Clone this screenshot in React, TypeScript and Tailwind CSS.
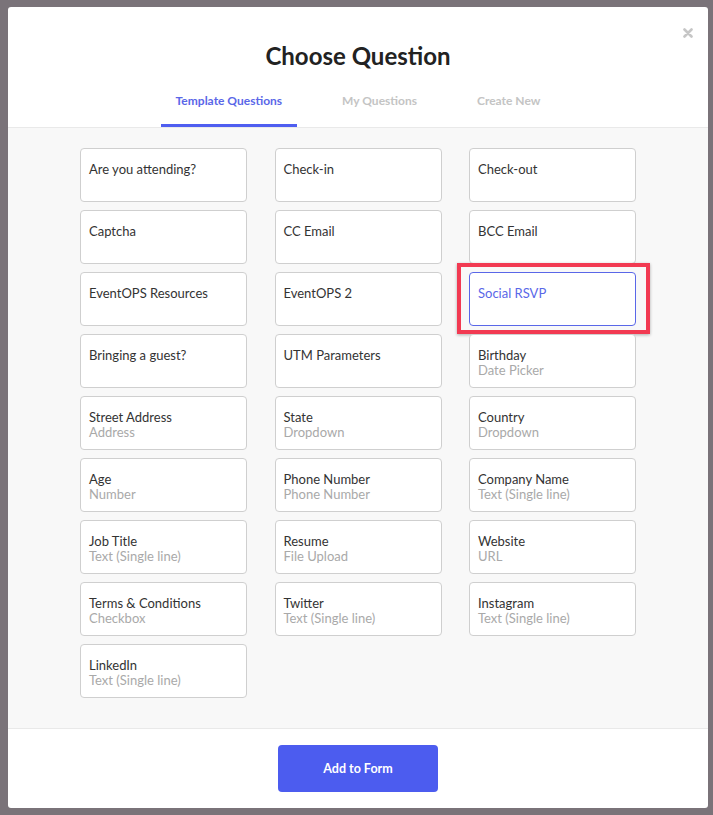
import { useState } from 'react'

interface Question {
    title: string
    type?: string
}

const questions: Question[] = [
    { title: 'Are you attending?' },
    { title: 'Check-in' },
    { title: 'Check-out' },
    { title: 'Captcha' },
    { title: 'CC Email' },
    { title: 'BCC Email' },
    { title: 'EventOPS Resources' },
    { title: 'EventOPS 2' },
    { title: 'Social RSVP' },
    { title: 'Bringing a guest?' },
    { title: 'UTM Parameters' },
    { title: 'Birthday', type: 'Date Picker' },
    { title: 'Street Address', type: 'Address' },
    { title: 'State', type: 'Dropdown' },
    { title: 'Country', type: 'Dropdown' },
    { title: 'Age', type: 'Number' },
    { title: 'Phone Number', type: 'Phone Number' },
    { title: 'Company Name', type: 'Text (Single line)' },
    { title: 'Job Title', type: 'Text (Single line)' },
    { title: 'Resume', type: 'File Upload' },
    { title: 'Website', type: 'URL' },
    { title: 'Terms & Conditions', type: 'Checkbox' },
    { title: 'Twitter', type: 'Text (Single line)' },
    { title: 'Instagram', type: 'Text (Single line)' },
    { title: 'LinkedIn', type: 'Text (Single line)' },
]

const tabs = ['Template Questions', 'My Questions', 'Create New']

export default function App() {
    const [activeTab, setActiveTab] = useState(0)
    const [selected, setSelected] = useState('Social RSVP')

    return (
        <div
            className="min-h-[815px] w-[713px] bg-[#7a7379] pl-[8px] pt-[7px]"
            style={{ fontFamily: 'Lato, "Open Sans", sans-serif' }}
        >
            <div className="relative flex h-[801px] w-[700px] flex-col rounded-[3px] bg-white">
                <button className="absolute right-[15px] top-[21px] text-[#c6c6c6]">
                    <svg width="10" height="10" viewBox="0 0 10 10">
                        <path d="M1.5 1.5 L8.5 8.5 M8.5 1.5 L1.5 8.5" stroke="currentColor" strokeWidth="2.6" strokeLinecap="round" />
                    </svg>
                </button>

                {/* header */}
                <div className="flex flex-col items-center border-b border-[#e9e9e9] pt-[34px]">
                    <h1 className="text-[24px] font-bold leading-[30px] text-[#222]">Choose Question</h1>
                    <div className="mt-[22px] flex gap-[30px]">
                        {tabs.map((tab, i) => (
                            <button
                                key={tab}
                                onClick={() => setActiveTab(i)}
                                className={`border-b-[3px] px-[15px] pb-[15px] text-[12px] font-bold leading-[16px] ${
                                    activeTab === i ? 'border-[#4f5ef0] text-[#5a67e8]' : 'border-transparent text-[#c4c4c4]'
                                }`}
                            >
                                {tab}
                            </button>
                        ))}
                    </div>
                </div>

                {/* question grid */}
                <div className="flex h-[600px] justify-center bg-[#f8f8f8] pt-[20px]">
                    <div className="grid h-fit grid-cols-[167px_167px_167px] gap-x-[27.5px] gap-y-[8px]">
                        {questions.map(q => {
                            const isSel = q.title === selected
                            return (
                                <div
                                    key={q.title}
                                    onClick={() => setSelected(q.title)}
                                    className={`relative h-[54px] cursor-pointer rounded-[4px] border bg-white px-[8px] pt-[13px] text-[13px] leading-[15px] ${
                                        isSel ? 'border-[#5a67e8]' : 'border-[#cfcfcf]'
                                    }`}
                                >
                                    <div className={isSel ? 'text-[#5a67e8]' : 'text-[#333]'}>{q.title}</div>
                                    {q.type && <div className="text-[#a9a9a9]">{q.type}</div>}
                                    {isSel && (
                                        <div className="pointer-events-none absolute -bottom-[9px] -left-[13px] -right-[15px] -top-[10px] border-4 border-[#f23a52] shadow-[0_1px_3px_rgba(0,0,0,0.3)]" />
                                    )}
                                </div>
                            )
                        })}
                    </div>
                </div>

                {/* footer */}
                <div className="flex flex-1 items-start justify-center border-t border-[#e9e9e9] pt-[16px]">
                    <button className="h-[47px] w-[160px] rounded-[4px] bg-[#4c5cef] pt-[2px] text-[12.5px] font-bold text-white">
                        Add to Form
                    </button>
                </div>
            </div>
        </div>
    )
}
